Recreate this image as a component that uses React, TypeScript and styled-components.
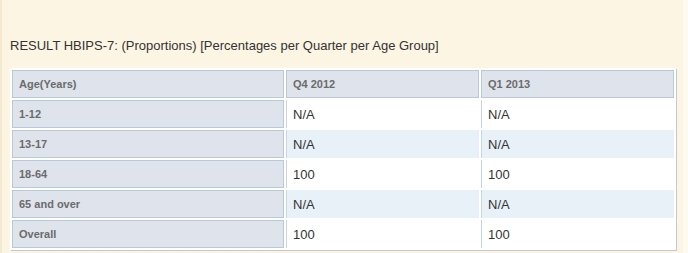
import React from 'react';
import styled, { createGlobalStyle } from 'styled-components';

const GlobalStyle = createGlobalStyle`
  html, body {
    margin: 0;
    padding: 0;
    background: #fefaf0;
  }
  body {
    font-family: 'Liberation Sans', Arial, sans-serif;
  }
`;

const Panel = styled.div`
  width: 683px;
  height: 253px;
  box-sizing: border-box;
  background: #fcf5e3;
  border-left: 2px solid #f4e9cf;
  padding: 38px 0 0 8px;
`;

const Title = styled.div`
  font-size: 13px;
  color: #333;
  line-height: 16px;
  margin-bottom: 14px;
`;

const Table = styled.table`
  width: 666px;
  background: #fff;
  border-collapse: separate;
  border-spacing: 2px;
  box-shadow: 1px 1px 0 #c3c9d2;
  table-layout: fixed;
`;

const HeadCell = styled.th<{ $w?: number }>`
  ${p => (p.$w ? `width: ${p.$w}px;` : '')}
  height: 26px;
  padding: 0 6px;
  text-align: left;
  font-size: 11px;
  font-weight: bold;
  color: #6b6b6b;
  background: #dfe4ec;
  border: 1px solid #b9c9dc;
`;

const LabelCell = styled.td`
  height: 26px;
  padding: 0 6px;
  font-size: 11px;
  font-weight: bold;
  color: #6b6b6b;
  background: #dfe4ec;
  border: 1px solid #b9c9dc;
`;

const ValueCell = styled.td<{ $alt: boolean }>`
  height: 28px;
  padding: 0 6px;
  font-size: 13px;
  color: #333;
  background: ${p => (p.$alt ? '#e8f0f8' : '#fff')};
  border-left: 1px solid #c6d5e7;
`;

const rows = [
  { label: '1-12', q4: 'N/A', q1: 'N/A' },
  { label: '13-17', q4: 'N/A', q1: 'N/A' },
  { label: '18-64', q4: '100', q1: '100' },
  { label: '65 and over', q4: 'N/A', q1: 'N/A' },
  { label: 'Overall', q4: '100', q1: '100' },
];

const App: React.FC = () => {
  return (
    <>
      <GlobalStyle />
      <Panel>
        <Title>RESULT HBIPS-7: (Proportions) [Percentages per Quarter per Age Group]</Title>
        <Table>
          <thead>
            <tr>
              <HeadCell $w={258}>Age(Years)</HeadCell>
              <HeadCell $w={179}>Q4 2012</HeadCell>
              <HeadCell>Q1 2013</HeadCell>
            </tr>
          </thead>
          <tbody>
            {rows.map((r, i) => (
              <tr key={r.label}>
                <LabelCell>{r.label}</LabelCell>
                <ValueCell $alt={i % 2 === 1}>{r.q4}</ValueCell>
                <ValueCell $alt={i % 2 === 1}>{r.q1}</ValueCell>
              </tr>
            ))}
          </tbody>
        </Table>
      </Panel>
    </>
  );
};

export default App;
